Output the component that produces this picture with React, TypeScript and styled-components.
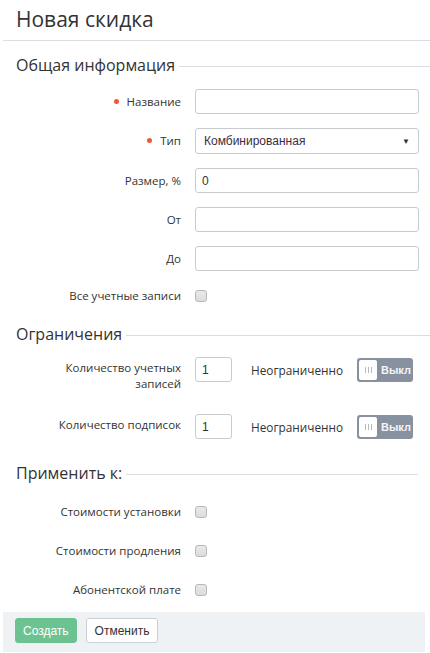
import React from "react";
import styled, { createGlobalStyle } from "styled-components";

const Global = createGlobalStyle`
  html, body { margin: 0; padding: 0; background: #fff; }
  body { font-family: "Open Sans", "Liberation Sans", sans-serif; color: #333; }
  * { box-sizing: border-box; }
`;

const Page = styled.div`
  padding-left: 3px;
  width: 430px;
`;

const Title = styled.h1`
  margin: 0;
  padding: 4px 0 0 13px;
  height: 40px;
  font-size: 21px;
  font-weight: 400;
  line-height: 30px;
  color: #333;
`;

const Divider = styled.div`
  height: 1px;
  background: #dcdde1;
`;

const Body = styled.div`
  padding: 12px 0 0 13px;
`;

const SectionHead = styled.div<{ $end?: number }>`
  display: flex;
  align-items: center;
  gap: 4px;
  margin-right: ${(p) => p.$end ?? 0}px;
  font-size: 16px;
  line-height: 24px;
  color: #333;
  &::after {
    content: "";
    flex: 1;
    height: 1px;
    background: #dcdde1;
    margin-top: 2px;
  }
`;

const Rows = styled.div<{ $gap: number; $top: number }>`
  display: flex;
  flex-direction: column;
  gap: ${(p) => p.$gap}px;
  padding-top: ${(p) => p.$top}px;
`;

const Row = styled.div`
  display: grid;
  grid-template-columns: 165px auto;
  column-gap: 14px;
  align-items: center;
`;

const Label = styled.label<{ $req?: boolean }>`
  text-align: right;
  font-size: 11.5px;
  line-height: 16px;
  color: #333;
  &::before {
    content: ${(p) => (p.$req ? '""' : "none")};
    display: inline-block;
    width: 5px;
    height: 5px;
    border-radius: 50%;
    background: #ef5a34;
    margin-right: 8px;
    vertical-align: 2px;
  }
`;

const Input = styled.input<{ $w?: number }>`
  width: ${(p) => p.$w ?? 224}px;
  height: 25px;
  border: 1px solid #c8cbd0;
  border-radius: 3px;
  padding: 0 6px;
  font-family: "Liberation Sans", Arial, sans-serif;
  font-size: 12px;
  color: #333;
  outline: none;
  background: #fff;
`;

const SelectBox = styled.div`
  position: relative;
  width: 224px;
  height: 26px;
  border: 1px solid #c8cbd0;
  border-radius: 3px;
  padding: 0 8px;
  display: flex;
  align-items: center;
  justify-content: space-between;
  font-family: "Liberation Sans", Arial, sans-serif;
  font-size: 12px;
  color: #3a2e3e;
  background: #fff;
`;

const Caret = styled.span`
  font-size: 8px;
  color: #333;
`;

const Check = styled.span`
  display: inline-block;
  width: 12px;
  height: 12px;
  border: 1px solid #b8b8b8;
  border-radius: 3px;
  background: linear-gradient(#e9e9e9, #dcdcdc);
`;

const LimitRow = styled.div`
  display: grid;
  grid-template-columns: 165px auto;
  column-gap: 14px;
  align-items: start;
`;

const LimitControls = styled.div`
  display: flex;
  align-items: center;
`;

const Unlimited = styled.span`
  margin-left: 19px;
  width: 106px;
  font-size: 11.8px;
  color: #333;
`;

const Toggle = styled.div`
  width: 56px;
  height: 24px;
  border-radius: 3px;
  background: #8891a0;
  display: flex;
  align-items: center;
  padding: 2px;
  gap: 4px;
`;

const Knob = styled.span`
  width: 20px;
  height: 20px;
  background: #fff;
  border-radius: 2px;
  display: flex;
  align-items: center;
  justify-content: center;
  gap: 2px;
  & > i {
    display: block;
    width: 1px;
    height: 6px;
    background: #b5b9c0;
  }
`;

const ToggleText = styled.span`
  font-family: "Liberation Sans", Arial, sans-serif;
  font-size: 11px;
  font-weight: 700;
  color: #f4f5f7;
`;

const Footer = styled.div`
  margin-top: 14px;
  margin-right: 5px;
  background: #eff2f5;
  height: 40px;
  padding: 6px 12px;
  display: flex;
  gap: 9px;
  align-items: flex-start;
`;

const Button = styled.button<{ $primary?: boolean }>`
  height: 25px;
  padding: 0 ${(p) => (p.$primary ? 7 : 8)}px;
  border-radius: 3px;
  font-family: "Liberation Sans", Arial, sans-serif;
  font-size: 12px;
  border: 1px solid ${(p) => (p.$primary ? "#6cc391" : "#ccd0d5")};
  background: ${(p) => (p.$primary ? "#6cc391" : "#fff")};
  color: ${(p) => (p.$primary ? "#fff" : "#333")};
`;

const Limit = ({ label }: { label: React.ReactNode }) => (
  <LimitRow>
    <Label style={{ paddingTop: 3 }}>{label}</Label>
    <LimitControls>
      <Input $w={37} defaultValue="1" />
      <Unlimited>Неограниченно</Unlimited>
      <Toggle>
        <Knob>
          <i />
          <i />
          <i />
        </Knob>
        <ToggleText>Выкл</ToggleText>
      </Toggle>
    </LimitControls>
  </LimitRow>
);

export default function App() {
  return (
    <Page>
      <Global />
      <Title>Новая скидка</Title>
      <Divider />
      <Body>
        <SectionHead>Общая информация</SectionHead>
        <Rows $gap={14} $top={12}>
          <Row>
            <Label $req>Название</Label>
            <Input />
          </Row>
          <Row>
            <Label $req>Тип</Label>
            <SelectBox>
              Комбинированная
              <Caret>▼</Caret>
            </SelectBox>
          </Row>
          <Row>
            <Label>Размер, %</Label>
            <Input defaultValue="0" />
          </Row>
          <Row>
            <Label>От</Label>
            <Input />
          </Row>
          <Row>
            <Label>До</Label>
            <Input />
          </Row>
          <Row style={{ marginTop: 3 }}>
            <Label>Все учетные записи</Label>
            <Check />
          </Row>
        </Rows>
        <div style={{ height: 18 }} />
        <SectionHead>Ограничения</SectionHead>
        <Rows $gap={22} $top={11}>
          <Limit label={<>Количество учетных<br />записей</>} />
          <Limit label="Количество подписок" />
        </Rows>
        <div style={{ height: 22 }} />
        <SectionHead $end={12}>Применить к:</SectionHead>
        <Rows $gap={23} $top={19}>
          <Row>
            <Label>Стоимости установки</Label>
            <Check />
          </Row>
          <Row>
            <Label>Стоимости продления</Label>
            <Check />
          </Row>
          <Row>
            <Label>Абонентской плате</Label>
            <Check />
          </Row>
        </Rows>
      </Body>
      <Footer>
        <Button $primary>Создать</Button>
        <Button>Отменить</Button>
      </Footer>
    </Page>
  );
}
